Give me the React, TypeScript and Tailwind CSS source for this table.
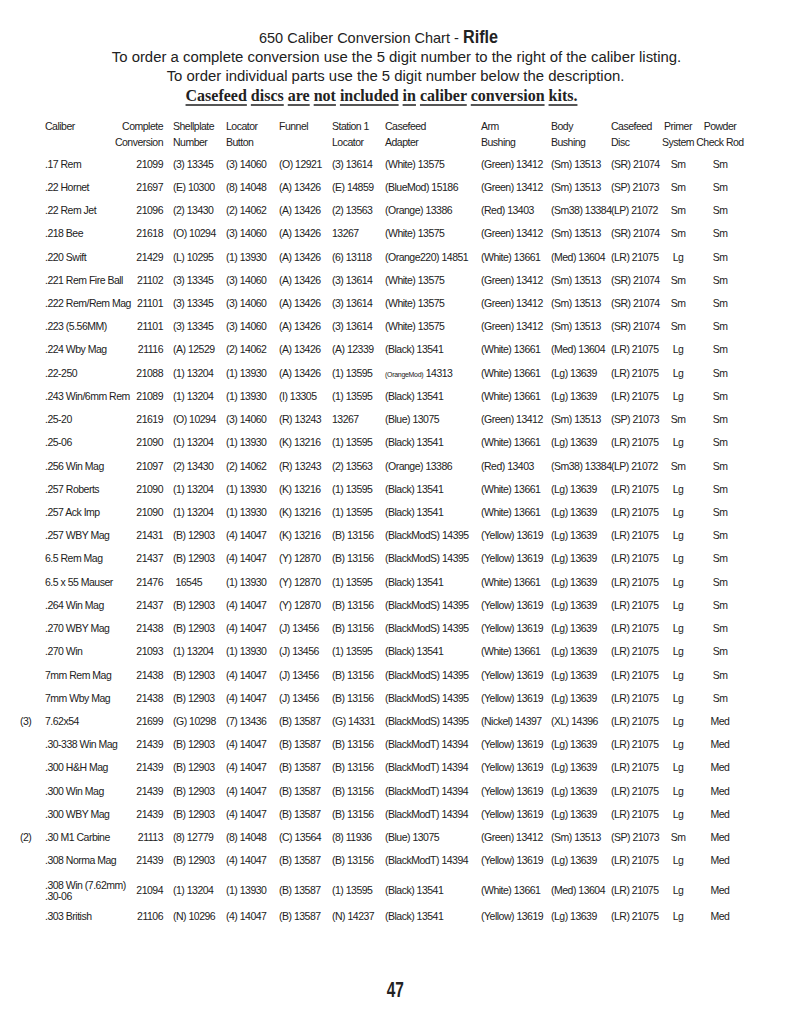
import React from "react";

const sans = {
  fontFamily: '"Liberation Sans", Arial, sans-serif',
};

type Row = {
  note?: string;
  caliber: React.ReactNode;
  complete: string;
  shell: string;
  locator: string;
  funnel: string;
  station: string;
  adapter: React.ReactNode;
  arm: string;
  body: string;
  disc: string;
  primer: string;
  powder: string;
  tall?: boolean;
};

const parts = (a: string, b: string, c: string, d: string, p: string, w: string) => ({
  arm: a,
  body: b,
  disc: c,
  adapter: d,
  primer: p,
  powder: w,
});

const whiteSm = parts("(Green) 13412", "(Sm) 13513", "(SR) 21074", "(White) 13575", "Sm", "Sm");
const blackLg = parts("(White) 13661", "(Lg) 13639", "(LR) 21075", "(Black) 13541", "Lg", "Sm");
const modS = parts("(Yellow) 13619", "(Lg) 13639", "(LR) 21075", "(BlackModS) 14395", "Lg", "Sm");
const modT = parts("(Yellow) 13619", "(Lg) 13639", "(LR) 21075", "(BlackModT) 14394", "Lg", "Med");
const orange = parts("(Red) 13403", "(Sm38) 13384", "(LP) 21072", "(Orange) 13386", "Sm", "Sm");

const rows: Row[] = [
  { caliber: ".17 Rem", complete: "21099", shell: "(3) 13345", locator: "(3) 14060", funnel: "(O) 12921", station: "(3) 13614", ...whiteSm },
  { caliber: ".22 Hornet", complete: "21697", shell: "(E) 10300", locator: "(8) 14048", funnel: "(A) 13426", station: "(E) 14859", ...whiteSm, adapter: "(BlueMod) 15186", disc: "(SP) 21073" },
  { caliber: ".22 Rem Jet", complete: "21096", shell: "(2) 13430", locator: "(2) 14062", funnel: "(A) 13426", station: "(2) 13563", ...orange },
  { caliber: ".218 Bee", complete: "21618", shell: "(O) 10294", locator: "(3) 14060", funnel: "(A) 13426", station: "13267", ...whiteSm },
  { caliber: ".220 Swift", complete: "21429", shell: "(L) 10295", locator: "(1) 13930", funnel: "(A) 13426", station: "(6) 13118", ...blackLg, adapter: "(Orange220) 14851", body: "(Med) 13604" },
  { caliber: ".221 Rem Fire Ball", complete: "21102", shell: "(3) 13345", locator: "(3) 14060", funnel: "(A) 13426", station: "(3) 13614", ...whiteSm },
  { caliber: ".222 Rem/Rem Mag", complete: "21101", shell: "(3) 13345", locator: "(3) 14060", funnel: "(A) 13426", station: "(3) 13614", ...whiteSm },
  { caliber: ".223 (5.56MM)", complete: "21101", shell: "(3) 13345", locator: "(3) 14060", funnel: "(A) 13426", station: "(3) 13614", ...whiteSm },
  { caliber: ".224 Wby Mag", complete: "21116", shell: "(A) 12529", locator: "(2) 14062", funnel: "(A) 13426", station: "(A) 12339", ...blackLg, body: "(Med) 13604" },
  {
    caliber: ".22-250", complete: "21088", shell: "(1) 13204", locator: "(1) 13930", funnel: "(A) 13426", station: "(1) 13595", ...blackLg,
    adapter: (
      <>
        <span className="text-[7px] tracking-[-0.3px]">(OrangeMod)</span> 14313
      </>
    ),
  },
  { caliber: ".243 Win/6mm Rem", complete: "21089", shell: "(1) 13204", locator: "(1) 13930", funnel: "(I) 13305", station: "(1) 13595", ...blackLg },
  { caliber: ".25-20", complete: "21619", shell: "(O) 10294", locator: "(3) 14060", funnel: "(R) 13243", station: "13267", ...whiteSm, adapter: "(Blue) 13075", disc: "(SP) 21073" },
  { caliber: ".25-06", complete: "21090", shell: "(1) 13204", locator: "(1) 13930", funnel: "(K) 13216", station: "(1) 13595", ...blackLg },
  { caliber: ".256 Win Mag", complete: "21097", shell: "(2) 13430", locator: "(2) 14062", funnel: "(R) 13243", station: "(2) 13563", ...orange },
  { caliber: ".257 Roberts", complete: "21090", shell: "(1) 13204", locator: "(1) 13930", funnel: "(K) 13216", station: "(1) 13595", ...blackLg },
  { caliber: ".257 Ack Imp", complete: "21090", shell: "(1) 13204", locator: "(1) 13930", funnel: "(K) 13216", station: "(1) 13595", ...blackLg },
  { caliber: ".257 WBY Mag", complete: "21431", shell: "(B) 12903", locator: "(4) 14047", funnel: "(K) 13216", station: "(B) 13156", ...modS },
  { caliber: "6.5 Rem Mag", complete: "21437", shell: "(B) 12903", locator: "(4) 14047", funnel: "(Y) 12870", station: "(B) 13156", ...modS },
  { caliber: "6.5 x 55 Mauser", complete: "21476", shell: "\u00a016545", locator: "(1) 13930", funnel: "(Y) 12870", station: "(1) 13595", ...blackLg },
  { caliber: ".264 Win Mag", complete: "21437", shell: "(B) 12903", locator: "(4) 14047", funnel: "(Y) 12870", station: "(B) 13156", ...modS },
  { caliber: ".270 WBY Mag", complete: "21438", shell: "(B) 12903", locator: "(4) 14047", funnel: "(J) 13456", station: "(B) 13156", ...modS },
  { caliber: ".270 Win", complete: "21093", shell: "(1) 13204", locator: "(1) 13930", funnel: "(J) 13456", station: "(1) 13595", ...blackLg },
  { caliber: "7mm Rem Mag", complete: "21438", shell: "(B) 12903", locator: "(4) 14047", funnel: "(J) 13456", station: "(B) 13156", ...modS },
  { caliber: "7mm Wby Mag", complete: "21438", shell: "(B) 12903", locator: "(4) 14047", funnel: "(J) 13456", station: "(B) 13156", ...modS },
  { note: "(3)", caliber: "7.62x54", complete: "21699", shell: "(G) 10298", locator: "(7) 13436", funnel: "(B) 13587", station: "(G) 14331", ...modT, adapter: "(BlackModS) 14395", arm: "(Nickel) 14397", body: "(XL) 14396" },
  { caliber: ".30-338 Win Mag", complete: "21439", shell: "(B) 12903", locator: "(4) 14047", funnel: "(B) 13587", station: "(B) 13156", ...modT },
  { caliber: ".300 H&H Mag", complete: "21439", shell: "(B) 12903", locator: "(4) 14047", funnel: "(B) 13587", station: "(B) 13156", ...modT },
  { caliber: ".300 Win Mag", complete: "21439", shell: "(B) 12903", locator: "(4) 14047", funnel: "(B) 13587", station: "(B) 13156", ...modT },
  { caliber: ".300 WBY Mag", complete: "21439", shell: "(B) 12903", locator: "(4) 14047", funnel: "(B) 13587", station: "(B) 13156", ...modT },
  { note: "(2)", caliber: ".30 M1 Carbine", complete: "21113", shell: "(8) 12779", locator: "(8) 14048", funnel: "(C) 13564", station: "(8) 11936", ...whiteSm, adapter: "(Blue) 13075", disc: "(SP) 21073", powder: "Med" },
  { caliber: ".308 Norma Mag", complete: "21439", shell: "(B) 12903", locator: "(4) 14047", funnel: "(B) 13587", station: "(B) 13156", ...modT },
  {
    tall: true,
    caliber: (
      <span className="block leading-[11px]">
        .308 Win (7.62mm)
        <br />
        .30-06
      </span>
    ),
    complete: "21094", shell: "(1) 13204", locator: "(1) 13930", funnel: "(B) 13587", station: "(1) 13595", ...modT,
    adapter: "(Black) 13541", arm: "(White) 13661", body: "(Med) 13604",
  },
  { caliber: ".303 British", complete: "21106", shell: "(N) 10296", locator: "(4) 14047", funnel: "(B) 13587", station: "(N) 14237", ...modT, adapter: "(Black) 13541" },
];

const grid =
  "grid grid-cols-[25px_71px_57px_53px_53px_53px_53px_96px_70px_60px_52px_30px_54px] pl-[20px] whitespace-nowrap";

function Head({ a, b }: { a: string; b?: string }) {
  return (
    <div>
      <div>{a}</div>
      {b && <div>{b}</div>}
    </div>
  );
}

function Header() {
  return (
    <div className={`${grid} leading-[16px]`}>
      <div />
      <Head a="Caliber" />
      <div className="pr-[10px] flex flex-col items-end">
        <div>Complete</div>
        <div>Conversion</div>
      </div>
      <Head a="Shellplate" b="Number" />
      <Head a="Locator" b="Button" />
      <Head a="Funnel" />
      <Head a="Station 1" b="Locator" />
      <Head a="Casefeed" b="Adapter" />
      <Head a="Arm" b="Bushing" />
      <Head a="Body" b="Bushing" />
      <Head a="Casefeed" b="Disc" />
      <div className="flex flex-col items-center">
        <div>Primer</div>
        <div>System</div>
      </div>
      <div className="flex flex-col items-center">
        <div>Powder</div>
        <div>Check Rod</div>
      </div>
    </div>
  );
}

function ChartRow({ r }: { r: Row }) {
  return (
    <div className={`${grid} items-center ${r.tall ? "h-[32px] pt-[5px]" : "h-[23.23px]"}`}>
      <div>{r.note}</div>
      <div>{r.caliber}</div>
      <div className="pr-[10px] text-right">{r.complete}</div>
      <div>{r.shell}</div>
      <div>{r.locator}</div>
      <div>{r.funnel}</div>
      <div>{r.station}</div>
      <div>{r.adapter}</div>
      <div>{r.arm}</div>
      <div>{r.body}</div>
      <div>{r.disc}</div>
      <div className="flex justify-center">{r.primer}</div>
      <div className="flex justify-center">{r.powder}</div>
    </div>
  );
}

export default function App() {
  const notice = "Casefeed discs are not included in caliber conversion kits.".split(" ");
  return (
    <div className="w-[791px] h-[1024px] bg-white text-[#222] overflow-hidden" style={sans}>
      <div className="pt-[27px] text-center leading-[19px]">
        <div className="text-[14.5px] pr-[28px]">
          650 Caliber Conversion Chart -{" "}
          <span className="inline-block text-[19px] font-bold scale-x-[0.85] origin-left">Rifle</span>
        </div>
        <div className="text-[14.9px] pl-[2px]">
          To order a complete conversion use the 5 digit number to the right of the caliber listing.
        </div>
        <div className="text-[14.9px]">
          To order individual parts use the 5 digit number below the description.
        </div>
        <div
          className="text-[16px] font-bold pr-[28px]"
          style={{ fontFamily: '"Liberation Serif", serif' }}
        >
          {notice.map((w, i) => (
            <React.Fragment key={i}>
              <span className="underline decoration-[1.5px] underline-offset-[3px] decoration-[#555]">{w}</span>
              {i < notice.length - 1 && " "}
            </React.Fragment>
          ))}
        </div>
      </div>

      <div className="mt-[13px] text-[10.5px] tracking-[-0.5px]">
        <Header />
        <div className="mt-[3px]">
          {rows.map((r, i) => (
            <ChartRow key={i} r={r} />
          ))}
        </div>
      </div>

      <div className="mt-[50px] flex justify-center leading-[24px]">
        <span className="inline-block text-[22px] font-bold scale-x-[0.7]">47</span>
      </div>
    </div>
  );
}
